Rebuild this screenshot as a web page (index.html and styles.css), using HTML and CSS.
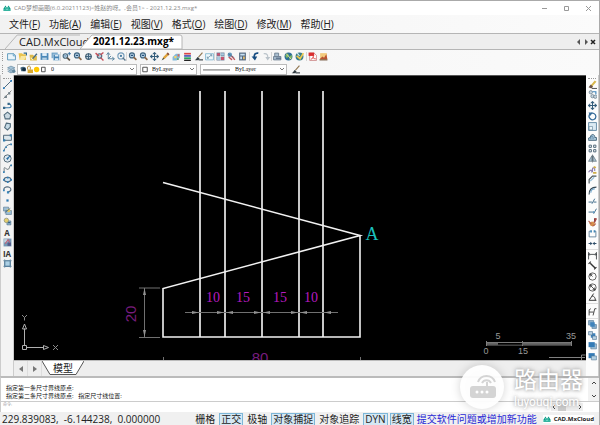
FILE: index.html
```html
<!DOCTYPE html>
<html lang="zh-CN">
<head>
<meta charset="utf-8">
<meta name="viewport" content="width=device-width, initial-scale=1">
<title>CAD梦想画图</title>
<link rel="stylesheet" href="styles.css">
</head>
<body>
<svg class="sprite" aria-hidden="true">
  <symbol id="logo" viewBox="0 0 16 16"><path d="M1 9l4-6 3 5 3-5 4 6v5H1z" fill="#0b9b86"/><path d="M4 6l4 6 3-5M1 12h14" stroke="#7fe0cf" stroke-width="1.5" fill="none"/></symbol>
  <symbol id="new" viewBox="0 0 16 16"><path d="M1 3h11l3 3v8H1z" fill="#e8f4fb" stroke="#4f8fb5" stroke-width="1.5"/><path d="M11 3v4h4" fill="#a7d0e6" stroke="#4f8fb5"/></symbol>
  <symbol id="open" viewBox="0 0 16 16"><path d="M1 2h6l2 2h5v10H3z" fill="#e9c34f"/><path d="M5 7h10l-4 7H3z" fill="#f8e7a2"/><path d="M10 2h5v4" fill="none" stroke="#356b8c" stroke-width="2"/></symbol>
  <symbol id="openweb" viewBox="0 0 16 16"><path d="M1 5h6l2 2h5v8H2z" fill="#dcb94a"/><path d="M5 12L13 2l2 2-8 9z" fill="#456b83"/><path d="M3 10l4 4" stroke="#fff4bd" stroke-width="2"/></symbol>
  <symbol id="save" viewBox="0 0 16 16"><path d="M1 2h14v12H1z" fill="#4d89b8"/><path d="M4 2h8v5H4z" fill="#e4f1fa"/><path d="M4 10h8v4H4z" fill="#b7d2e5"/></symbol>
  <symbol id="saveas" viewBox="0 0 16 16"><path d="M1 1h11v10H1z" fill="#71a3c7"/><path d="M4 4h11v11H4z" fill="#4684b4" stroke="#dceaf5"/><path d="M7 5h6v3H7zM7 11h6v3H7z" fill="#d8e8f3"/></symbol>
  <symbol id="zoomin" viewBox="0 0 16 16"><circle cx="6" cy="7" r="4" fill="#cfe1ed" stroke="#47687e" stroke-width="2"/><path d="M9 10l5 5" stroke="#5d5145" stroke-width="3"/><path d="M10 3h6M13 0v6M4 7h4" stroke="#2e6b9e" stroke-width="1.5"/></symbol>
  <symbol id="zoom" viewBox="0 0 16 16"><circle cx="7" cy="6" r="4.5" fill="#b7d2e6" stroke="#3e6480" stroke-width="2"/><path d="M10 9l5 5" stroke="#8b6748" stroke-width="3"/><path d="M5 6h4" stroke="#1d4972" stroke-width="2"/></symbol>
  <symbol id="target" viewBox="0 0 16 16"><circle cx="8" cy="8" r="5" fill="#c8dce8" stroke="#455e70" stroke-width="2"/><path d="M8 2v12M2 8h12" stroke="#40637d" stroke-width="2"/></symbol>
  <symbol id="zoomred" viewBox="0 0 16 16"><circle cx="8" cy="7" r="4" fill="#bcd1de" stroke="#506b7e" stroke-width="2"/><path d="M1 2l6 5M10 10l5 5M10 5l5-4" stroke="#c64d57" stroke-width="2.5"/></symbol>
  <symbol id="axes" viewBox="0 0 16 16"><path d="M4 2v10h10M1 5l3-4 3 4M11 9l4 3-4 3M4 12l5-5" stroke="#477796" stroke-width="1.5" fill="none"/></symbol>
  <symbol id="orbit" viewBox="0 0 16 16"><circle cx="7" cy="7" r="5.5" fill="none" stroke="#749cba" stroke-width="2"/><circle cx="7" cy="7" r="2" fill="#477ba2"/><path d="M10 10l5 5" stroke="#59748a" stroke-width="2.5"/></symbol>
  <symbol id="move" viewBox="0 0 16 16"><path d="M8 1v14M1 8h14M5 4l3-3 3 3M5 12l3 3 3-3M4 5L1 8l3 3M12 5l3 3-3 3" stroke="#345d7b" stroke-width="1.8" fill="none"/></symbol>
  <symbol id="pencil" viewBox="0 0 16 16"><path d="M2 14l2-5 8-8 3 3-8 8z" fill="#dfa43b"/><path d="M12 1l3 3-2 2-3-3z" fill="#864f45"/><path d="M1 15l3-5 2 2z" fill="#374f60"/></symbol>
  <symbol id="palette" viewBox="0 0 16 16"><path d="M1 9l6-6h7v7l-6 5H1z" fill="#82b9da"/><path d="M4 7h4v4H4z" fill="#f2d369"/><path d="M10 4h3v4h-3z" fill="#d4665e"/><path d="M9 11h3v3H9z" fill="#62a270"/></symbol>
  <symbol id="stack" viewBox="0 0 16 16"><path d="M2 3h12" stroke="#da4545" stroke-width="3"/><path d="M2 7h12" stroke="#4b53b6" stroke-width="3"/><path d="M2 11h12" stroke="#28a35b" stroke-width="3"/><path d="M2 15h12" stroke="#222" stroke-width="3"/></symbol>
  <symbol id="brush" viewBox="0 0 16 16"><path d="M15 1L8 9" stroke="#8f744e" stroke-width="2"/><path d="M1 14c4 0 3-4 6-5l3 3c-2 3-6 3-9 2z" fill="#303a40"/><path d="M8 14h8" stroke="#303a40" stroke-width="2"/></symbol>
  <symbol id="window" viewBox="0 0 16 16"><path d="M1 3h14v11H1z" fill="#eff8fc" stroke="#7fb6cf" stroke-width="1.5"/><path d="M4 11l8-6M9 5h3v3M4 8v3h3" stroke="#416e8a" fill="none"/></symbol>
  <symbol id="grid" viewBox="0 0 16 16"><path d="M1 1h14v14H1z" fill="#687994"/><path d="M2 2h5v4H2zM9 9h5v5H9z" fill="#cb506d"/><path d="M9 2h5v4H9zM2 9h5v5H2z" fill="#a9cce1"/><path d="M1 8h14M8 1v14" stroke="#fff"/></symbol>
  <symbol id="pin" viewBox="0 0 16 16"><circle cx="5" cy="5" r="4" fill="#6298bd"/><path d="M8 7l6 7M3 9l6 5" stroke="#bf5961" stroke-width="2.5"/><path d="M2 3l11 7" stroke="#435d75"/></symbol>
  <symbol id="calc" viewBox="0 0 16 16"><path d="M2 1h12v14H2z" fill="#536981"/><path d="M4 3h8v3H4zM4 8h3v5H4z" fill="#c9e1f2"/><path d="M9 8h3v5H9z" fill="#e7be6b"/></symbol>
  <symbol id="undo" viewBox="0 0 16 16"><path d="M13 2C7 1 5 5 6 11" stroke="#174d82" stroke-width="3" fill="none"/><path d="M1 8h10l-4 7z" fill="#174d82"/></symbol>
  <symbol id="redo" viewBox="0 0 16 16"><path d="M3 3c6-1 8 3 7 8" stroke="#bac3ca" stroke-width="2" fill="none"/><path d="M6 9h9l-5 6z" fill="#bac3ca"/></symbol>
  <symbol id="print" viewBox="0 0 16 16"><path d="M3 7V2h7v5M1 8h13v6H1z" fill="#a9bed0" stroke="#61768a" stroke-width="1.5"/><path d="M5 11h9" stroke="#4d627d" stroke-width="2"/></symbol>
  <symbol id="globe" viewBox="0 0 16 16"><circle cx="8" cy="8" r="7" fill="#2c6e98"/><path d="M2 6l5-4 2 5-4 4zM10 8l4-3v6l-5 3z" fill="#78b663"/><path d="M3 2l10 11" stroke="#efe3a2" stroke-width="1.5"/></symbol>
  <symbol id="earth" viewBox="0 0 16 16"><circle cx="8" cy="8" r="7" fill="#397d8b"/><path d="M3 7l6 5 6-10" stroke="#efc84e" stroke-width="3" fill="none"/><path d="M4 2l4 5" stroke="#d8edf5" stroke-width="2"/></symbol>
  <symbol id="pdf" viewBox="0 0 16 16"><path d="M3 2h8l4 4v9H3z" fill="#fff" stroke="#b34c4c"/><path d="M1 1h10v6H1z" fill="#d92e30"/><path d="M5 13c5-2 6-6 4-5s2 5 5 4" stroke="#d33" stroke-width="1.5" fill="none"/></symbol>
  <symbol id="image" viewBox="0 0 16 16"><path d="M2 2h12v12H2z" fill="#f3cb7d"/><path d="M1 13l5-5 3 2 4-6 2 9z" fill="#b95432"/><path d="M1 14h14" stroke="#73553f" stroke-width="2"/></symbol>
  <symbol id="layers" viewBox="0 0 16 16"><path d="M1 5l6-3 7 3-7 3zM1 8l6 3 7-3M1 11l6 3 7-3" fill="#a7c6da" stroke="#6688a0" stroke-width="1.3"/><circle cx="12" cy="11" r="3" fill="#64899f"/></symbol>
  <symbol id="line" viewBox="0 0 16 16"><path d="M2 14L14 2" stroke="#31516b" stroke-width="1.5"/><path d="M0 13h3v3H0zM13 0h3v3h-3z" fill="#2676b5"/></symbol>
  <symbol id="ray" viewBox="0 0 16 16"><path d="M1 15L15 1" stroke="#777" stroke-width="1.5"/><path d="M3 10h4v4H3zM9 4h4v4H9z" fill="#75838b"/></symbol>
  <symbol id="pline" viewBox="0 0 16 16"><path d="M1 12h10c5 0 4-7-1-7" stroke="#3b7baa" stroke-width="2" fill="none"/><path d="M0 10h4v4H0zM8 3h4v4H8z" fill="#376788"/></symbol>
  <symbol id="polygon" viewBox="0 0 16 16"><path d="M8 2l6 5-2 7H4L2 7z" fill="#c9d8e1" stroke="#526c7d" stroke-width="2"/></symbol>
  <symbol id="poly2" viewBox="0 0 16 16"><path d="M6 2l7 1v6l-5 5-5-4z" fill="#c5dae6" stroke="#526c7d" stroke-width="2"/></symbol>
  <symbol id="rect" viewBox="0 0 16 16"><path d="M1 4h14v9H1z" fill="#dce7ed" stroke="#4c6375" stroke-width="1.7"/><path d="M0 11h4v4H0zM12 2h4v4h-4z" fill="#347dae"/></symbol>
  <symbol id="arc" viewBox="0 0 16 16"><path d="M2 14C3 7 7 3 14 2" stroke="#4d6678" stroke-width="1.5" fill="none"/><path d="M0 12h3v3H0zM4 6h3v3H4zM13 1h3v3h-3z" fill="#3883b8"/></symbol>
  <symbol id="circle" viewBox="0 0 16 16"><circle cx="8" cy="8" r="6.5" fill="#dce7ef" stroke="#526775" stroke-width="1.7"/><path d="M6 8h4M8 6v4M9 7l4-4" stroke="#256ca1" stroke-width="2"/></symbol>
  <symbol id="spline" viewBox="0 0 16 16"><path d="M2 15V8c0-5 5 4 8 1s0-6 5-7" stroke="#5c6970" stroke-width="1.5" fill="none"/><path d="M0 13h3v3H0zM13 1h3v3h-3z" fill="#3983b5"/></symbol>
  <symbol id="ellipse" viewBox="0 0 16 16"><ellipse cx="8" cy="8" rx="6" ry="4" fill="#d5e5ef" stroke="#546a7c" stroke-width="2"/><path d="M0 7h3v3H0zM13 7h3v3h-3zM7 3h3v3H7zM7 11h3v3H7z" fill="#3280b9"/></symbol>
  <symbol id="earc" viewBox="0 0 16 16"><path d="M2 10c-3-8 12-9 12-2 0 3-3 4-6 4" stroke="#546b7d" stroke-width="2" fill="none"/><path d="M0 8h3v3H0zM7 11h4v4H7z" fill="#3b86b9"/></symbol>
  <symbol id="point" viewBox="0 0 16 16"><path d="M6 6h4v4H6z" fill="#2c78b1"/></symbol>
  <symbol id="insert" viewBox="0 0 16 16"><path d="M1 2h9v7H1zM5 8h10v7H5z" fill="#9dbed5" stroke="#466b85"/><circle cx="10" cy="8" r="3" fill="#e4c75c"/><path d="M3 12l10-8" stroke="#456d89" stroke-width="1.5"/></symbol>
  <symbol id="block" viewBox="0 0 16 16"><path d="M7 7h7v7H7z" fill="#92b4cd" stroke="#466b85"/><circle cx="6" cy="6" r="4" fill="#e5ce6c" stroke="#6e7b72"/><path d="M9 10h4" stroke="#315c7a" stroke-width="2"/></symbol>
  <symbol id="gradient" viewBox="0 0 16 16"><path d="M1 1h14v14H1z" fill="#7597b4"/><path d="M2 2h6v6H2z" fill="#c1d4e1"/><path d="M8 8h6v6H8z" fill="#515988"/><path d="M4 10l5-7 3 5" stroke="#be6177" stroke-width="2" fill="none"/></symbol>
  <symbol id="region" viewBox="0 0 16 16"><path d="M3 3h10v10H3z" fill="#acd0e5" stroke="#4b7798" stroke-width="2"/><path d="M3 0v16M13 0v16M0 3h16M0 13h16" stroke="#688ba3"/></symbol>
  <symbol id="erase" viewBox="0 0 16 16"><path d="M4 10l8-9 3 2-8 9z" fill="#d8b74c"/><path d="M1 13l4-5 4 4-3 3z" fill="#6d5549"/><path d="M7 15h9" stroke="#333" stroke-width="1.5"/></symbol>
  <symbol id="copy" viewBox="0 0 16 16"><circle cx="5" cy="4" r="3" fill="#c5d3dd" stroke="#526776"/><circle cx="8" cy="11" r="3" fill="#c5d3dd" stroke="#526776"/><circle cx="13" cy="12" r="3" fill="#c5d3dd" stroke="#526776"/><path d="M8 3h6v5" stroke="#3b83b9" stroke-width="2" fill="none"/></symbol>
  <symbol id="rotate" viewBox="0 0 16 16"><path d="M4 4c4-4 10-1 10 4s-6 8-10 4-2-7 0-9" stroke="#356b99" stroke-width="2.3" fill="none"/><path d="M1 1h7L4 7z" fill="#356b99"/></symbol>
  <symbol id="scale" viewBox="0 0 16 16"><path d="M1 1h14v14H1z" fill="#dceaf3" stroke="#58819e" stroke-width="1.5"/><path d="M2 8h6v6H2z" fill="#eef6fa" stroke="#587b91"/></symbol>
  <symbol id="offset" viewBox="0 0 16 16"><path d="M1 12V9l3-1c1-8 9-6 8 0h3v5H1z" fill="#adcce0" stroke="#49687d" stroke-width="1.7"/><path d="M5 11V8c1-4 4-3 4 1v2" stroke="#4b7796" stroke-width="1.5" fill="none"/></symbol>
  <symbol id="array" viewBox="0 0 16 16"><path d="M2 2h4v4H2zM10 2h4v4h-4zM2 10h4v4H2zM10 10h4v4h-4z" fill="#fff" stroke="#4c6474" stroke-width="1.7"/></symbol>
  <symbol id="mirror" viewBox="0 0 16 16"><path d="M7 3v10H1zM9 3v10h6z" fill="#aec4d1" stroke="#445864"/><path d="M8 1v14" stroke="#2c3e4b"/></symbol>
  <symbol id="stretch" viewBox="0 0 16 16"><path d="M1 13c4-7 8-3 5 0M8 13V7c0-4 5-2 4 4" stroke="#8d7dab" stroke-width="2" fill="none"/><path d="M10 3l4 2M9 14h6" stroke="#d0ae46" stroke-width="3"/></symbol>
  <symbol id="chamfer" viewBox="0 0 16 16"><path d="M2 15V8l6-6h7" stroke="#4a545a" stroke-width="2" fill="none"/><path d="M4 11l7-7" stroke="#8dbad8" stroke-width="2"/></symbol>
  <symbol id="fillet" viewBox="0 0 16 16"><path d="M2 15C2 6 6 2 15 2" stroke="#394b58" stroke-width="2" fill="none"/><path d="M5 12C5 7 8 5 12 5" stroke="#78aace" stroke-width="2" fill="none"/></symbol>
  <symbol id="trim" viewBox="0 0 16 16"><path d="M1 9h6M10 9h5M7 12l5-9" stroke="#3d6988" stroke-width="1.7"/></symbol>
  <symbol id="extend" viewBox="0 0 16 16"><path d="M1 9h9M10 12l5-9" stroke="#3d6988" stroke-width="1.7"/><path d="M9 7l3 2-3 2" fill="#5497c6"/></symbol>
  <symbol id="explode" viewBox="0 0 16 16"><path d="M2 9l5-3 5 2v6H5z" fill="#d7904b"/><path d="M11 1l3 1-3 6" stroke="#a44847" stroke-width="3"/><path d="M1 5l5 6M8 15l6-5" stroke="#b46253" stroke-width="2"/></symbol>
  <symbol id="break" viewBox="0 0 16 16"><path d="M5 4H2v10h12V4h-3" stroke="#577893" stroke-width="1.5" fill="none"/><path d="M4 2h3v4H4zM10 2h3v4h-3z" fill="#4589b7"/></symbol>
  <symbol id="join" viewBox="0 0 16 16"><path d="M1 8h5M10 8h5" stroke="#31506b" stroke-width="2"/><path d="M4 5l4 3-4 3zM12 5L8 8l4 3z" fill="#31506b"/></symbol>
  <symbol id="linear" viewBox="0 0 16 16"><path d="M1 2v13M15 2v13M1 6h14M3 4L1 6l2 2M13 4l2 2-2 2" stroke="#353a3e" stroke-width="1.5" fill="none"/></symbol>
  <symbol id="aligned" viewBox="0 0 16 16"><path d="M4 4l9 9" stroke="#333" stroke-width="2.5"/><path d="M1 5l4-4M11 15l4-4" stroke="#333" stroke-width="2"/></symbol>
  <symbol id="radius" viewBox="0 0 16 16"><circle cx="8" cy="8" r="6.5" fill="none" stroke="#4a4a4a" stroke-width="1.5"/><path d="M8 8L4 4m0 4V4h4" stroke="#333" stroke-width="1.5" fill="none"/></symbol>
  <symbol id="diameter" viewBox="0 0 16 16"><circle cx="8" cy="8" r="6.5" fill="none" stroke="#4a4a4a" stroke-width="1.5"/><path d="M4 4l8 8M4 8V4h4M12 8v4H8" stroke="#333" stroke-width="1.5" fill="none"/></symbol>
  <symbol id="angle" viewBox="0 0 16 16"><path d="M10 1L2 13h13M7 5c5 1 6 4 6 8" stroke="#333" stroke-width="1.7" fill="none"/></symbol>
  <symbol id="dimedit" viewBox="0 0 16 16"><path d="M2 15V5l3-2M2 9h8M9 15l3-12h3" stroke="#444" stroke-width="1.7" fill="none"/></symbol>
  <symbol id="front" viewBox="0 0 16 16"><path d="M1 1h9v8H1zM7 8h8v7H7z" fill="#8db0cb" stroke="#476f91"/><path d="M4 4h8v8H4z" fill="#3e83bc"/></symbol>
  <symbol id="back" viewBox="0 0 16 16"><path d="M5 4h8v8H5z" fill="#3e83bc"/><path d="M1 1h7v6H1zM8 9h7v6H8z" fill="#b9d2e4" stroke="#426888"/></symbol>
  <symbol id="above" viewBox="0 0 16 16"><path d="M5 5h10v9H5z" fill="#a5c2d6" stroke="#4c7190"/><path d="M1 2h11v9H1z" fill="#347bb6"/></symbol>
  <symbol id="below" viewBox="0 0 16 16"><path d="M1 2h11v9H1z" fill="#347bb6"/><path d="M6 7h9v7H6z" fill="#b3cfe1" stroke="#48708f"/></symbol>
</svg>

<div class="app">
  <header class="titlebar">
    <svg class="mark"><use href="#logo"/></svg>
    <h1>CAD梦想画图(6.0.20211123)&lt;姓赵的呀。,会员1&gt; - 2021.12.23.mxg*</h1>
    <div class="winbtns">
      <button aria-label="最小化"><svg viewBox="0 0 7 7"><path d="M1 3.5h5"/></svg></button>
      <button aria-label="最大化"><svg viewBox="0 0 7 7"><path d="M1.5 1.5h4v4h-4z"/></svg></button>
      <button aria-label="关闭"><svg viewBox="0 0 7 7"><path d="M1 1l5 5M6 1L1 6"/></svg></button>
    </div>
  </header>

  <nav class="menubar">
    <button>文件(<u>F</u>)</button><button>功能(<u>A</u>)</button><button>编辑(<u>E</u>)</button><button>视图(<u>V</u>)</button><button>格式(<u>O</u>)</button><button>绘图(<u>D</u>)</button><button>修改(<u>M</u>)</button><button>帮助(<u>H</u>)</button>
  </nav>

  <div class="filetabs">
    <button class="filetab"><svg viewBox="0 0 80 15" preserveAspectRatio="none"><path d="M0 15L13 1h67" fill="none" stroke="#b5b5b5"/></svg><span>CAD.MxCloud</span></button>
    <button class="filetab current"><svg viewBox="0 0 104 15" preserveAspectRatio="none"><path d="M0 15L12 1h89q2 0 2 2v12z" fill="#fff" stroke="#b5b5b5"/></svg><span>2021.12.23.mxg*</span></button>
    <div class="tabnav">
      <button aria-label="上一个"><svg viewBox="0 0 6 6"><path d="M4 0v6L1 3z"/></svg></button>
      <button aria-label="下一个"><svg viewBox="0 0 6 6"><path d="M2 0v6l3-3z"/></svg></button>
      <button aria-label="关闭文件"><svg viewBox="0 0 6 6"><path d="M1 1l4 4M5 1L1 5" stroke="#222" stroke-width="1.5"/></svg></button>
    </div>
  </div>

  <div class="toolbar">
    <i class="grip"></i>
    <div class="group">
      <button aria-label="新建"><svg><use href="#new"/></svg></button>
      <button aria-label="打开"><svg><use href="#open"/></svg></button>
      <button aria-label="打开网络文件"><svg><use href="#openweb"/></svg></button>
      <button aria-label="保存"><svg><use href="#save"/></svg></button>
      <button aria-label="另存为"><svg><use href="#saveas"/></svg></button>
    </div>
    <div class="group">
      <button aria-label="放大"><svg><use href="#zoomin"/></svg></button>
      <button aria-label="缩小"><svg><use href="#zoom"/></svg></button>
      <button aria-label="全部缩放"><svg><use href="#target"/></svg></button>
      <button aria-label="范围缩放"><svg><use href="#zoomred"/></svg></button>
      <button aria-label="坐标系"><svg><use href="#axes"/></svg></button>
      <button aria-label="动态观察"><svg><use href="#orbit"/></svg></button>
    </div>
    <div class="group">
      <button aria-label="上一视图"><svg><use href="#zoom"/></svg></button>
      <button aria-label="窗口缩放"><svg><use href="#zoom"/></svg></button>
      <button aria-label="平移"><svg><use href="#move"/></svg></button>
      <button aria-label="草图"><svg><use href="#pencil"/></svg></button>
      <button aria-label="颜色"><svg><use href="#palette"/></svg></button>
      <button aria-label="线宽"><svg><use href="#stack"/></svg></button>
      <button aria-label="格式刷"><svg><use href="#brush"/></svg></button>
      <button aria-label="全屏"><svg><use href="#window"/></svg></button>
    </div>
    <div class="group">
      <button aria-label="图块库"><svg><use href="#grid"/></svg></button>
      <button aria-label="定位"><svg><use href="#pin"/></svg></button>
      <button aria-label="计算"><svg><use href="#calc"/></svg></button>
    </div>
    <div class="group late">
      <button aria-label="撤销"><svg><use href="#undo"/></svg></button>
      <button aria-label="重做"><svg><use href="#redo"/></svg></button>
    </div>
    <div class="group">
      <button aria-label="打印"><svg><use href="#print"/></svg></button>
      <button aria-label="网页"><svg><use href="#globe"/></svg></button>
      <button aria-label="发布"><svg><use href="#earth"/></svg></button>
    </div>
    <div class="group late">
      <button aria-label="PDF"><svg><use href="#pdf"/></svg></button>
      <button aria-label="图片"><svg><use href="#image"/></svg></button>
    </div>
  </div>

  <div class="toolbar props">
    <i class="grip"></i>
    <button aria-label="图层管理"><svg><use href="#layers"/></svg></button>
    <div class="combo layer">
      <svg class="adorn" viewBox="0 0 30 10"><path d="M1 3q3-2 6 0v4H2z" fill="#45657d"/><circle cx="5" cy="5" r="2" fill="#142f43"/><path d="M9 5h6v4H9z" fill="#d9a92f"/><path d="M9 5V2q2-2 3 0v3" stroke="#b1832b" fill="none"/><circle cx="19" cy="5" r="3" fill="#ffc800"/><path d="M24.500 2.500h4v5h-4z" fill="#fff" stroke="#444"/></svg>
      <select aria-label="图层"><option>0</option></select>
      <svg class="chev" viewBox="0 0 6 4"><path d="M1 1l2 2 2-2"/></svg>
    </div>
    <div class="combo color">
      <svg class="adorn" viewBox="0 0 8 10"><path d="M1.500 2.500h5v5h-5z" fill="#fff" stroke="#444"/></svg>
      <select aria-label="颜色"><option>ByLayer</option></select>
      <svg class="chev" viewBox="0 0 6 4"><path d="M1 1l2 2 2-2"/></svg>
    </div>
    <div class="combo ltype">
      <svg class="adorn" viewBox="0 0 32 10"><path d="M1 5.500h30" stroke="#555"/></svg>
      <select aria-label="线型"><option>ByLayer</option></select>
      <svg class="chev" viewBox="0 0 6 4"><path d="M1 1l2 2 2-2"/></svg>
    </div>
    <button aria-label="匹配属性"><svg><use href="#brush"/></svg></button>
  </div>

  <main class="work">
    <div class="side">
      <i class="hgrip"></i>
      <div class="stackcol draw">
        <button aria-label="直线"><svg><use href="#line"/></svg></button>
        <button aria-label="构造线"><svg><use href="#ray"/></svg></button>
        <button aria-label="多段线"><svg><use href="#pline"/></svg></button>
        <button aria-label="正多边形"><svg><use href="#polygon"/></svg></button>
        <button aria-label="多边形"><svg><use href="#poly2"/></svg></button>
        <button aria-label="矩形"><svg><use href="#rect"/></svg></button>
        <button aria-label="圆弧"><svg><use href="#arc"/></svg></button>
        <button aria-label="圆"><svg><use href="#circle"/></svg></button>
        <button aria-label="样条曲线"><svg><use href="#spline"/></svg></button>
        <button aria-label="椭圆"><svg><use href="#ellipse"/></svg></button>
        <button aria-label="椭圆弧"><svg><use href="#earc"/></svg></button>
        <button aria-label="点"><svg><use href="#point"/></svg></button>
        <button aria-label="插入块"><svg><use href="#insert"/></svg></button>
        <button aria-label="创建块"><svg><use href="#block"/></svg></button>
        <button class="letter">A</button>
        <button aria-label="填充"><svg><use href="#gradient"/></svg></button>
        <button class="letter">IA</button>
        <button aria-label="面域"><svg><use href="#region"/></svg></button>
      </div>
    </div>

    <div class="center">
      <svg class="drawing" viewBox="14 75 572 285" role="img" aria-label="图形">
        <g class="geom">
          <path d="M200 91v246M225 91v246M262 91v246M299 91v246M323 91v246" stroke="#c8c8c8" stroke-width="2"/>
          <path d="M163 182.500L360 235.500L163 288.500V337h197V235" fill="none" stroke="#f2f2f2" stroke-width="1.600"/>
        </g>
        <g class="dims">
          <path d="M139 288h21M139 337.500h21M144.500 288v49M185 312.500h153M163.500 357v3M360.500 357v3" stroke="#707070" fill="none"/>
          <path d="M144.500 288l-1.500 7h3zM144.500 337l-1.500-7h3zM199 312.500l-7-1.500v3zM224 312.500l-7-1.500v3zM226 312.500l7-1.500v3zM261 312.500l-7-1.500v3zM263 312.500l7-1.500v3zM298 312.500l-7-1.500v3zM300 312.500l7-1.500v3zM324 312.500l7-1.500v3z" fill="#929292"/>
        </g>
        <g class="dimtext">
          <text x="213" y="302">10</text><text x="243" y="302">15</text><text x="280" y="302">15</text><text x="311" y="302">10</text>
        </g>
        <g class="plain">
          <text transform="translate(136 314) rotate(-90)">20</text>
          <text x="260" y="363">80</text>
        </g>
        <text class="node" x="372" y="240">A</text>
        <g stroke="#b0b0b0" fill="none">
          <path d="M22.500 345.500h4v4h-4zM26.500 347.500h17M24.500 345.500v-17M43.500 345.500l5 2-5 2zM22.500 329l2-5 2 5z"/>
          <path d="M53 345l5 5M58 345l-5 5M22 315l2.500 2.500L27 315M24.500 317.500v3" stroke="#8a8a8a"/>
        </g>
        <path d="M486 342.500h86M486 345h86M486.500 341v5M571.500 341v5M522.500 341v5" stroke="#808080" fill="none"/>
        <path d="M498 343.700h24" stroke="#000" stroke-width="1.500"/><path d="M522 343.700h49M487 343.700h11" stroke="#666" stroke-width="2"/>
        <g class="ruler"><text x="498" y="339">5</text><text x="571" y="339">35</text><text x="486" y="354">0</text><text x="523" y="354">15</text></g>
        <path d="M549 357.500h36M581.500 360v-5h4" stroke="#808080" fill="none"/>
      </svg>
      <div class="sheets">
        <button class="arrow" aria-label="上一页"><svg viewBox="0 0 6 8"><path d="M5 1v6L1 4z" fill="#777"/></svg></button>
        <button class="arrow" aria-label="下一页"><svg viewBox="0 0 6 8"><path d="M1 1v6l4-3z" fill="#777"/></svg></button>
        <button class="sheet"><svg viewBox="0 0 42 14" preserveAspectRatio="none"><path d="M0 0l8 13.500h26L42 0z" fill="#fff"/><path d="M0 0l8 13.500h26L42 0" fill="none" stroke="#555"/></svg><span>模型</span></button>
      </div>
    </div>

    <div class="side right">
      <i class="hgrip"></i>
      <div class="stackcol edit">
        <button aria-label="删除"><svg><use href="#erase"/></svg></button>
        <button aria-label="复制"><svg><use href="#copy"/></svg></button>
        <button aria-label="移动"><svg><use href="#move"/></svg></button>
        <button aria-label="旋转"><svg><use href="#rotate"/></svg></button>
        <button aria-label="缩放"><svg><use href="#scale"/></svg></button>
        <button aria-label="偏移"><svg><use href="#offset"/></svg></button>
        <button aria-label="阵列"><svg><use href="#array"/></svg></button>
        <button aria-label="镜像"><svg><use href="#mirror"/></svg></button>
        <button aria-label="拉伸"><svg><use href="#stretch"/></svg></button>
        <button aria-label="倒角"><svg><use href="#chamfer"/></svg></button>
        <button aria-label="圆角"><svg><use href="#fillet"/></svg></button>
        <button aria-label="修剪"><svg><use href="#trim"/></svg></button>
        <button aria-label="延伸"><svg><use href="#extend"/></svg></button>
        <button aria-label="分解"><svg><use href="#explode"/></svg></button>
        <button aria-label="打断"><svg><use href="#break"/></svg></button>
        <button aria-label="合并"><svg><use href="#join"/></svg></button>
      </div>
      <div class="stackcol measure">
        <button aria-label="线性标注"><svg><use href="#linear"/></svg></button>
        <button aria-label="对齐标注"><svg><use href="#aligned"/></svg></button>
        <button aria-label="半径标注"><svg><use href="#radius"/></svg></button>
        <button aria-label="直径标注"><svg><use href="#diameter"/></svg></button>
        <button aria-label="角度标注"><svg><use href="#angle"/></svg></button>
      </div>
      <div class="stackcol dimedit">
        <button aria-label="编辑标注"><svg><use href="#dimedit"/></svg></button>
      </div>
      <div class="stackcol order">
        <button aria-label="前置"><svg><use href="#front"/></svg></button>
        <button aria-label="后置"><svg><use href="#back"/></svg></button>
        <button aria-label="上移"><svg><use href="#above"/></svg></button>
        <button aria-label="下移"><svg><use href="#below"/></svg></button>
      </div>
    </div>
  </main>

  <section class="command">
    <div class="log">
      <div class="lines"><p>指定第一条尺寸界线原点:</p><p>指定第二条尺寸界线原点:&nbsp;&nbsp; 指定尺寸线位置:</p></div>
      <div class="vscroll"><svg viewBox="0 0 6 4"><path d="M1 3l2-2 2 2"/></svg><svg viewBox="0 0 6 4"><path d="M1 1l2 2 2-2"/></svg></div>
    </div>
    <div class="prompt">
      <label for="cmd">命令:</label><input id="cmd" type="text">
      <div class="hscroll"><svg viewBox="0 0 4 6"><path d="M3 1L1 3l2 2"/></svg><i></i><svg viewBox="0 0 4 6"><path d="M1 1l2 2-2 2"/></svg></div>
    </div>
  </section>

  <footer class="status">
    <span class="coords">229.839083,&nbsp; -6.144238,&nbsp; 0.000000</span>
    <div class="modes">
      <button>栅格</button><button class="on">正交</button><button>极轴</button><button class="on">对象捕捉</button><button>对象追踪</button><button class="on">DYN</button><button class="on">线宽</button>
    </div>
    <a href="#feedback">提交软件问题或增加新功能</a>
    <span class="brand"><svg class="mark"><use href="#logo"/></svg>CAD.MxCloud</span>
  </footer>

  <div class="watermark">
    <svg viewBox="0 0 44 44"><circle cx="22" cy="22" r="22" fill="#fff" fill-opacity=".95"/><g fill="none" stroke="#d4d4d4" stroke-width="2"><path d="M18 17a9 9 0 0 1 17 0M22 18a5 5 0 0 1 9 0"/></g><path d="M27 17v5" stroke="#d4d4d4" stroke-width="2"/><rect x="10" y="21" width="26" height="12" rx="3" fill="#d4d4d4"/><g fill="#fff"><circle cx="17" cy="27" r="1.500"/><circle cx="22" cy="27" r="1.500"/><circle cx="27" cy="27" r="1.500"/></g></svg>
    <div><strong>路由器</strong><span>luyouqi.com</span></div>
  </div>
</div>
</body>
</html>
```
FILE: styles.css
```css
* { box-sizing: border-box; }
body { margin: 0; font-family: "Open Sans", "Noto Sans CJK SC", sans-serif; font-size: 10px; color: #222; background: #f0f0f0; }
button { font: inherit; color: inherit; background: none; border: 0; padding: 0; margin: 0; white-space: nowrap; }
svg { display: block; }
.sprite { position: absolute; width: 0; height: 0; }
.app { position: relative; min-height: 100vh; display: flex; flex-direction: column; border-top: 1px solid #aaa; border-right: 1px solid #aaa; }

.titlebar { height: 14px; display: flex; align-items: center; gap: 3px; padding: 0 7px 0 3px; background: #fff; }
.mark { width: 8px; height: 8px; flex: none; }
.titlebar h1 { margin: 0; flex: 1; font-size: 6px; line-height: 12px; font-weight: 400; color: #888; white-space: nowrap; }
.winbtns { display: flex; gap: 15px; }
.winbtns svg { width: 7px; height: 7px; fill: none; stroke: #999; }

.menubar { height: 18px; display: flex; gap: 9px; padding: 0 9px; background: linear-gradient(90deg, #f2f2f2, #fbfbfb); }
.menubar button { line-height: 18px; }
.menubar u { text-underline-offset: 1px; }

.filetabs { height: 17px; display: flex; align-items: flex-end; background: #eee; border-top: 1px solid #b5b5b5; border-bottom: 1px solid #b5b5b5; padding: 0 3px 0 5px; }
.filetab { position: relative; height: 15px; line-height: 15px; font-size: 11px; text-align: left; width: 75px; padding-left: 14px; }
.filetab svg { position: absolute; inset: 0; width: 100%; height: 100%; }
.filetab span { position: relative; }
.filetab.current { width: 103px; padding-left: 13px; font-weight: 700; color: #000; font-size: 10px; }
.tabnav { margin-left: auto; align-self: center; display: flex; gap: 1px; }
.tabnav svg { width: 6px; height: 6px; fill: #555; }

.toolbar { height: 13px; display: flex; align-items: center; padding-left: 2px; background: linear-gradient(90deg, #f4f4f4, #fafafa); }
.toolbar button svg { width: 9px; height: 9px; margin: 0 1px; }
.grip { width: 4px; height: 9px; border-left: 1px dotted #999; }
.group { display: flex; }
.group + .group { box-shadow: -1px 0 #d5d5d5; }
.group.late { margin-left: 2px; }
.props { height: 12px; }
.combo { position: relative; height: 11px; display: flex; align-items: center; margin-right: 3px; background: #fff; border: 1px solid #bbb; }
.combo select { appearance: none; flex: 1; min-width: 0; height: 9px; line-height: 9px; border: 0; padding: 0 0 0 3px; background: none; font: 6px "Liberation Serif", serif; color: #111; }
.adorn { height: 9px; flex: none; }
.layer { width: 120px; }
.layer .adorn { width: 30px; }
.color { width: 57px; }
.color .adorn { width: 8px; }
.ltype { width: 87px; }
.ltype .adorn { width: 31px; }
.chev { width: 6px; height: 4px; margin-right: 1px; flex: none; }
.chev, .vscroll svg, .hscroll svg { fill: none; stroke: #777; }

.work { flex: 1; display: flex; min-height: 0; }
.side { flex: none; width: 14px; padding-top: 3px; background: #f3f3f3; border-left: 1px solid #ccc; border-right: 1px solid #ccc; }
.side.right { width: 13px; background: #fcfcfc; border-left: 0; }
.hgrip { display: block; width: 8px; margin: 0 auto; border-top: 1px dotted #999; }
.stackcol { display: grid; grid-auto-rows: 1fr; justify-items: center; align-items: center; }
.stackcol svg { width: 9px; height: 9px; }
.draw { height: 190px; }
.edit { height: 170px; }
.measure { height: 54px; border-top: 1px solid #ddd; }
.dimedit { height: 16px; border-top: 1px solid #ddd; border-bottom: 1px solid #ddd; }
.order { height: 43px; }
.letter { font-size: 8px; line-height: 9px; font-weight: 700; color: #333; }
.center { flex: 1; min-width: 0; display: flex; flex-direction: column; background: #000; }
.drawing { width: 100%; flex: 1; min-height: 0; background: linear-gradient(#555 1px, #000 1px); }
.drawing text { text-anchor: middle; }
.dimtext { font: 14px "Liberation Serif", serif; fill: #b71bc0; }
.plain { font: 15px "Liberation Sans", sans-serif; fill: #771c7d; }
.node { font: 18px "Liberation Serif", serif; fill: #1bc0bd; }
.ruler { font: 9px "Liberation Sans", sans-serif; fill: #999; }
.sheets { height: 16px; display: flex; background: #eee; border-top: 1px solid #bbb; }
.arrow { width: 14px; display: grid; place-items: center; border-right: 1px solid #ddd; }
.arrow svg { width: 6px; height: 8px; }
.sheet { position: relative; width: 42px; height: 14px; line-height: 14px; }
.sheet svg { position: absolute; inset: 0; width: 100%; height: 100%; }
.sheet span { position: relative; }

.command { background: #fff; border-top: 2px solid #bbb; border-left: 1px solid #ccc; }
.log { height: 24px; display: flex; justify-content: space-between; border-bottom: 1px solid #ccc; }
.lines { padding: 6px 0 0 5px; }
.lines p { margin: 0; font-size: 6px; line-height: 8px; color: #111; }
.vscroll { width: 11px; display: flex; flex-direction: column; justify-content: space-between; align-items: center; padding: 3px 0; background: #f2f2f2; }
.vscroll svg { width: 6px; height: 4px; stroke: #444; }
.prompt { height: 10px; display: flex; align-items: center; padding: 0 16px 0 2px; }
.prompt label { font-size: 4px; line-height: 6px; align-self: flex-start; color: #999; }
.prompt input { flex: 1; min-width: 0; height: 8px; border: 0; padding: 0; font-size: 6px; background: none; outline: 0; }
.hscroll { width: 32px; height: 8px; display: flex; align-items: center; padding: 0 1px; background: #eee; }
.hscroll svg { width: 4px; height: 6px; stroke: #444; }
.hscroll i { width: 8px; height: 7px; margin: 0 auto 0 2px; background: #ccc; }

.status { height: 15px; display: flex; align-items: center; gap: 3px; padding: 0 5px 1px 2px; background: #f0f0f0; line-height: 13px; white-space: nowrap; }
.coords { flex: 1; }
.modes { display: flex; gap: 2px; }
.modes button { height: 13px; line-height: 11px; padding: 0 1px; border: 1px solid transparent; }
.modes .on { background: #d5e8f4; border-color: #7db7d8; }
.status a { color: #2929d6; text-decoration: none; }
.brand { display: flex; align-items: center; gap: 3px; margin-left: 3px; background: #fff; font: 700 6px "Open Sans", sans-serif; }

.watermark { position: absolute; right: 16px; bottom: 17px; display: flex; align-items: center; gap: 10px; color: #fff; pointer-events: none; }
.watermark > svg { width: 44px; height: 44px; filter: drop-shadow(0 0 5px rgba(0, 0, 0, .18)); }
.watermark div { display: flex; flex-direction: column; text-shadow: 0 0 5px #999, 0 0 3px #bbb; }
.watermark strong { font-size: 23px; line-height: 30px; font-weight: 400; }
.watermark span { font: 12px/16px Roboto, sans-serif; }
```
